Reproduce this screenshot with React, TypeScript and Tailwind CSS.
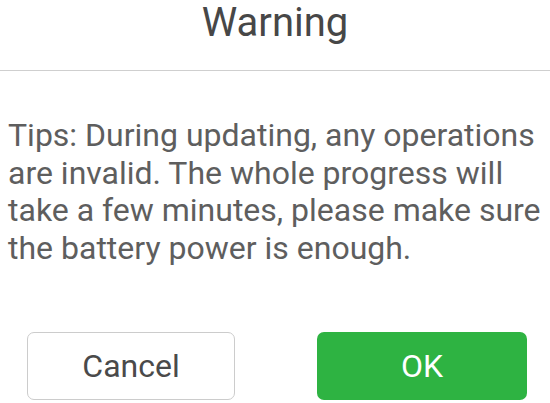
export default function App() {
  return (
    <div className="h-[403px] w-[550px] overflow-hidden bg-white font-['Roboto',sans-serif]">
      <div className="h-[70px] pt-[3px] text-center text-[40px] leading-none text-[#474747]">
        Warning
      </div>
      <div className="h-px bg-[#cfcfcf]" />
      <p className="pl-[8px] pt-[46px] text-[32px] leading-[37.5px] text-[#5e5e5e]">
        Tips: During updating, any operations are invalid. The whole progress will take a few minutes, please make sure the battery power is enough.
      </p>
      <div className="mt-[65px] flex justify-between pl-[27px] pr-[23px]">
        <button className="h-[68px] w-[208px] rounded-[7px] border border-[#cccccc] bg-white text-[32px] text-[#4a4a4a]">
          Cancel
        </button>
        <button className="h-[68px] w-[210px] rounded-[7px] bg-[#2eb342] text-[32px] text-white">
          OK
        </button>
      </div>
    </div>
  );
}
